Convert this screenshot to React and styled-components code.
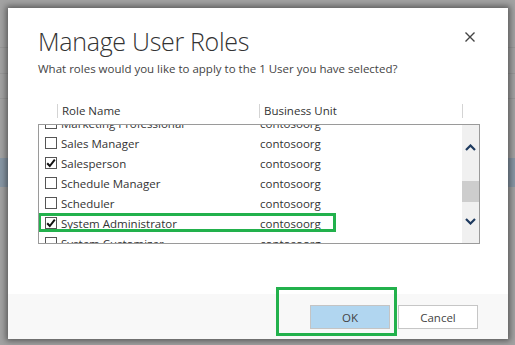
import React from 'react';
import styled, { createGlobalStyle } from 'styled-components';

const GlobalStyle = createGlobalStyle`
  html, body {
    margin: 0;
    padding: 0;
  }
  body {
    font-family: "Open Sans", "Noto Sans", sans-serif;
    color: #333;
  }
`;

const Backdrop = styled.div`
  width: 515px;
  height: 345px;
  box-sizing: border-box;
  padding: 8px 7px 6px 8px;
  background-color: #a2a2a2;
  background-image:
    linear-gradient(to bottom, transparent 158px, #8796a4 158px, #8796a4 187px, transparent 187px),
    linear-gradient(to bottom, transparent 73px, #979797 73px, #979797 74px, transparent 74px),
    linear-gradient(to bottom, transparent 98px, #979797 98px, #979797 99px, transparent 99px),
    linear-gradient(to bottom, transparent 47px, #979797 47px, #979797 48px, transparent 48px);
  overflow: hidden;
`;

const Dialog = styled.div`
  width: 500px;
  height: 331px;
  background: #fff;
  box-shadow: 0 0 6px 2px rgba(0, 0, 0, 0.45);
  display: flex;
  flex-direction: column;
`;

const Body = styled.div`
  flex: 1;
  padding: 17px 28px 0 30px;
  display: flex;
  flex-direction: column;
`;

const TitleRow = styled.div`
  display: flex;
  justify-content: space-between;
  align-items: flex-start;
`;

const Title = styled.h1`
  margin: 0;
  font-weight: 300;
  font-size: 25px;
  line-height: 32px;
  color: #333;
  letter-spacing: -0.3px;
`;

const CloseButton = styled.button`
  border: none;
  background: none;
  padding: 0;
  margin: 7px 5px 0 0;
  width: 10px;
  height: 10px;
  display: flex;
  color: #444;
`;

const Subtitle = styled.p`
  margin: 4px 0 0;
  font-size: 11.5px;
  line-height: 16px;
  color: #444;
`;

const Grid = styled.div`
  margin-top: 24px;
  width: 442px;
  display: flex;
  flex-direction: column;
`;

const HeaderRow = styled.div`
  display: flex;
  height: 23px;
  padding-top: 3px;
  box-sizing: border-box;
  align-items: flex-start;
  font-size: 11.5px;
  color: #333;
`;

const HeaderCell = styled.div`
  width: ${({ $w }) => $w}px;
  padding-left: ${({ $pad }) => $pad ?? 4}px;
  box-sizing: border-box;
  border-left: ${({ $sep }) => ($sep ? '1px solid #d4d4d4' : 'none')};
  line-height: 14px;
  height: 14px;
`;

const ListBox = styled.div`
  border: 1px solid #9a9a9a;
  height: 118px;
  display: flex;
  overflow: hidden;
`;

const Rows = styled.div`
  flex: 1;
  margin-top: -12px;
  display: flex;
  flex-direction: column;
`;

const Row = styled.div`
  position: relative;
  height: 20px;
  flex-shrink: 0;
  display: flex;
  align-items: center;
  font-size: 11.5px;
  color: #333;

  &::after {
    content: '';
    display: ${({ $marked }) => ($marked ? 'block' : 'none')};
    position: absolute;
    left: -1px;
    top: 0;
    width: 298px;
    height: 19px;
    box-sizing: border-box;
    border: 3px solid #22b14c;
  }
`;

const NameCell = styled.div`
  width: 220px;
  box-sizing: border-box;
  padding-left: 6px;
  display: flex;
  align-items: center;
  gap: 4px;
  white-space: nowrap;
`;

const Box = styled.span`
  width: 12px;
  height: 12px;
  box-sizing: border-box;
  border: 1px solid #555;
  background: #fff;
  display: flex;
  align-items: center;
  justify-content: center;
  flex-shrink: 0;
`;

const UnitCell = styled.div`
  padding-left: 1px;
`;

const Scrollbar = styled.div`
  width: 17px;
  background: #f0f0f0;
  display: flex;
  flex-direction: column;
  align-items: center;
  padding-top: 14px;
  box-sizing: border-box;
`;

const Arrow = styled.div`
  width: 17px;
  height: 16px;
  display: flex;
  align-items: center;
  justify-content: center;
  margin-bottom: ${({ $mb }) => $mb}px;
`;

const Thumb = styled.div`
  width: 17px;
  height: 21px;
  background: #cdcdcd;
  margin-bottom: 11px;
`;

const Footer = styled.div`
  height: 45px;
  background: #f8f8f8;
  display: flex;
  justify-content: flex-end;
  align-items: flex-start;
  gap: 8px;
  padding: 11px 30px 0 0;
  box-sizing: border-box;
`;

const Marked = styled.div`
  position: relative;
  display: flex;

  &::after {
    content: '';
    position: absolute;
    left: -34px;
    top: -18px;
    width: 121px;
    height: 49px;
    box-sizing: border-box;
    border: 3px solid #22b14c;
  }
`;

const Button = styled.button`
  width: 80px;
  height: 24px;
  box-sizing: border-box;
  border: 1px solid ${({ $primary }) => ($primary ? '#c4c4c4' : '#c6c6c6')};
  background: ${({ $primary }) => ($primary ? '#b1d6f0' : '#fff')};
  font-family: "Open Sans", "Noto Sans", sans-serif;
  font-size: 11.5px;
  color: #444;
  padding: 0;
`;

const roles = [
  { name: 'Marketing Professional', checked: false },
  { name: 'Sales Manager', checked: false },
  { name: 'Salesperson', checked: true },
  { name: 'Schedule Manager', checked: false },
  { name: 'Scheduler', checked: false },
  { name: 'System Administrator', checked: true, marked: true },
  { name: 'System Customizer', checked: false },
];

const Check = () => (
  <svg width="10" height="10" viewBox="0 0 10 10">
    <path d="M1.2 5.2 L3.8 8 L8.8 1.6" fill="none" stroke="#111" strokeWidth="2" />
  </svg>
);

const Chevron = ({ up }) => (
  <svg width="11" height="7" viewBox="0 0 11 7">
    <path
      d={up ? 'M1 6 L5.5 1.5 L10 6' : 'M1 1 L5.5 5.5 L10 1'}
      fill="none"
      stroke="#1e3a5f"
      strokeWidth="2.2"
    />
  </svg>
);

const App = () => (
  <>
    <GlobalStyle />
    <Backdrop>
      <Dialog>
        <Body>
          <TitleRow>
            <Title>Manage User Roles</Title>
            <CloseButton aria-label="Close">
              <svg width="10" height="10" viewBox="0 0 10 10">
                <path d="M0.5 0.5 L9.5 9.5 M9.5 0.5 L0.5 9.5" stroke="#444" strokeWidth="1.4" />
              </svg>
            </CloseButton>
          </TitleRow>
          <Subtitle>What roles would you like to apply to the 1 User you have selected?</Subtitle>
          <Grid>
            <HeaderRow>
              <HeaderCell $w={19} $pad={0} />
              <HeaderCell $w={202} $sep>Role Name</HeaderCell>
              <HeaderCell $w={203} $sep>Business Unit</HeaderCell>
              <HeaderCell $w={18} $sep />
            </HeaderRow>
            <ListBox>
              <Rows>
                {roles.map((r) => (
                  <Row key={r.name} $marked={r.marked}>
                    <NameCell>
                      <Box>{r.checked && <Check />}</Box>
                      {r.name}
                    </NameCell>
                    <UnitCell>contosoorg</UnitCell>
                  </Row>
                ))}
              </Rows>
              <Scrollbar>
                <Arrow $mb={26}><Chevron up /></Arrow>
                <Thumb />
                <Arrow $mb={0}><Chevron /></Arrow>
              </Scrollbar>
            </ListBox>
          </Grid>
        </Body>
        <Footer>
          <Marked>
            <Button $primary>OK</Button>
          </Marked>
          <Button>Cancel</Button>
        </Footer>
      </Dialog>
    </Backdrop>
  </>
);

export default App;
